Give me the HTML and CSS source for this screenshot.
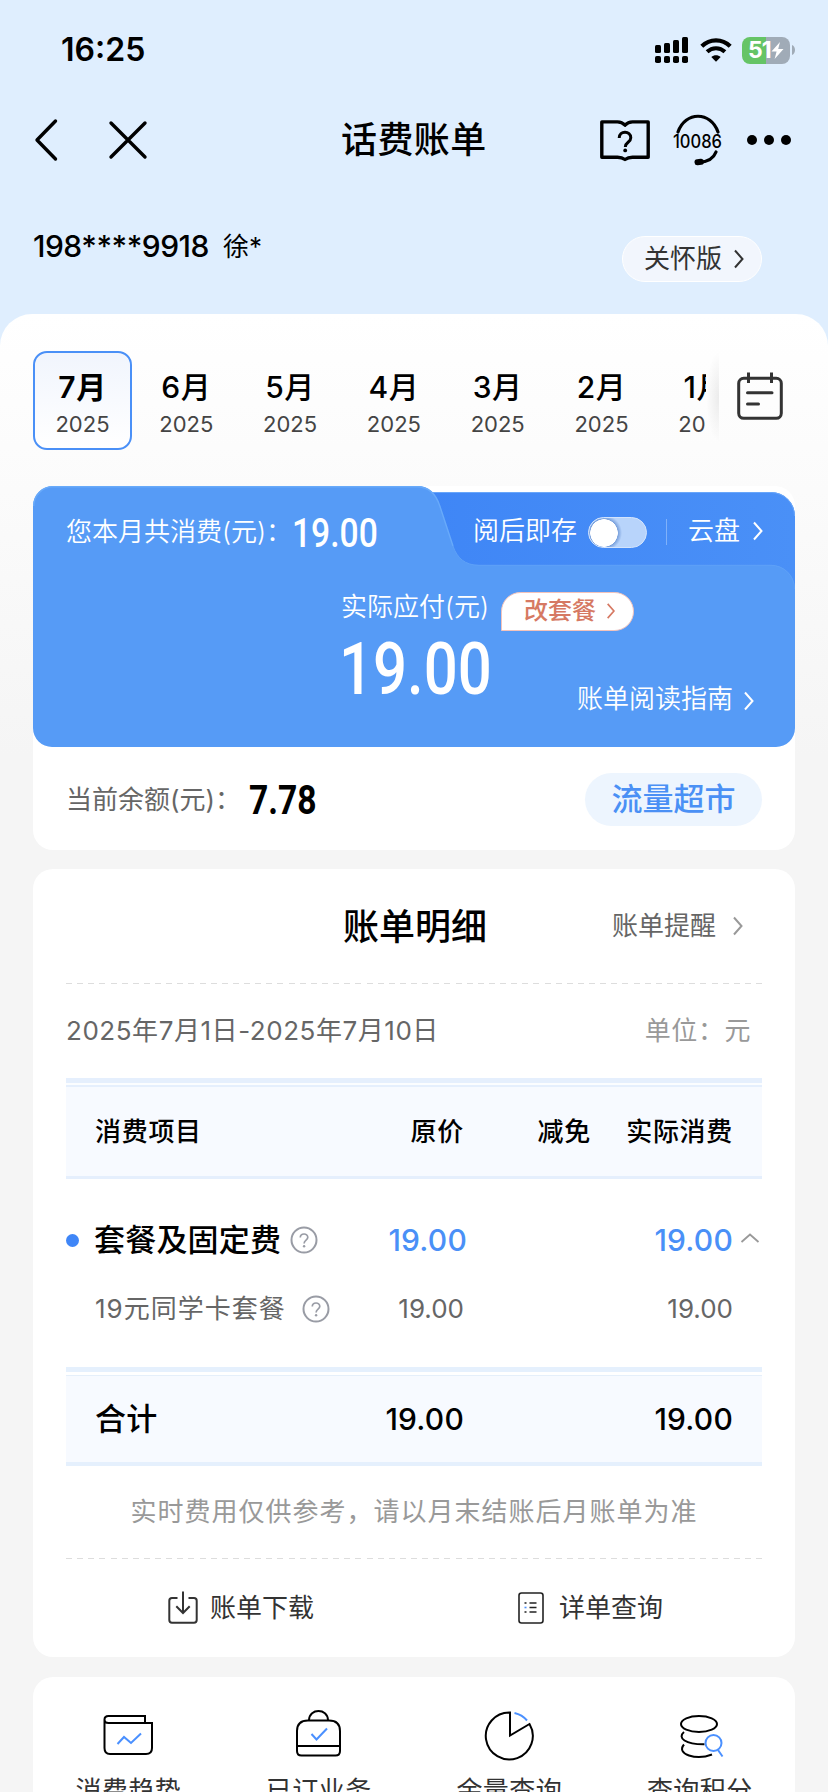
FILE: index.html
```html
<!DOCTYPE html>
<html lang="zh-CN">
<head>
<meta charset="utf-8">
<meta name="viewport" content="width=device-width, initial-scale=1">
<title>话费账单</title>
<link rel="stylesheet" href="styles.css">
</head>
<body>
<!-- shared icons -->
<svg width="0" height="0" class="defs">
  <symbol id="arrow" viewBox="0 0 12 20"><path d="M2 1.5 L9.5 10 L2 18.5" fill="none" stroke="currentColor" stroke-width="2"/></symbol>
  <symbol id="help" viewBox="0 0 28 28">
    <circle cx="14" cy="14" r="12.5" fill="none" stroke="#999ca5" stroke-width="2"/>
    <path d="M10.3 11.6 C10.3 6.8 17.8 6.9 17.8 11.3 C17.8 14.2 14.1 14 14.1 17.4" fill="none" stroke="#999ca5" stroke-width="1.7"/>
    <circle cx="14.1" cy="20.3" r="1.2" fill="#999ca5"/>
  </symbol>
</svg>

<div class="status">
  <span class="time">16:25</span>
  <svg class="signal" width="34" height="27" viewBox="0 0 34 27">
    <rect x="0" y="8" width="6" height="8" rx="1.5"/><rect x="9" y="6" width="6" height="10" rx="1.5"/>
    <rect x="18" y="3" width="6" height="13" rx="1.5"/><rect x="27" y="0" width="6" height="16" rx="1.5"/>
    <rect x="0" y="19" width="6" height="7" rx="1.8"/><rect x="9" y="19" width="6" height="7" rx="1.8"/>
    <rect x="18" y="19" width="6" height="7" rx="1.8"/><rect x="27" y="19" width="6" height="7" rx="1.8"/>
  </svg>
  <svg class="wifi" width="32" height="24" viewBox="0 0 32 24">
    <path d="M1.8 8.2 C9.8 0.3 22.2 0.3 30.2 8.2" fill="none" stroke="#000" stroke-width="4.2"/>
    <path d="M7.1 13.8 C12.2 8.9 19.8 8.9 24.9 13.8" fill="none" stroke="#000" stroke-width="4"/>
    <path d="M11.3 19 C14 16.6 18 16.6 20.7 19 L16 23.8 Z"/>
  </svg>
  <div class="battery"><b>51</b><svg width="13" height="17" viewBox="0 0 13 17"><path d="M9 0 L0.5 9.6 H5.6 L3.6 17 L12.5 7 H7.2 Z" fill="#fff"/></svg></div>
  <svg class="cap" width="4" height="10" viewBox="0 0 4 10"><path d="M0 0 C4 1.5 4 8.5 0 10 Z" fill="#a0abb7"/></svg>
</div>

<div class="nav">
  <svg width="24" height="44" viewBox="0 0 24 44"><path d="M21.5 3 L3 22 L21.5 41" fill="none" stroke="#000" stroke-width="3.4" stroke-linecap="round" stroke-linejoin="round"/></svg>
  <svg class="close" width="40" height="40" viewBox="0 0 40 40"><path d="M3 3 L37 37 M37 3 L3 37" fill="none" stroke="#000" stroke-width="3.4" stroke-linecap="round"/></svg>
  <h1>话费账单</h1>
  <svg class="book" width="50" height="44" viewBox="0 0 50 44" fill="none" stroke="#000" stroke-width="3.4">
    <path d="M1.8 3.9 H17.5 C21 3.9 23 5 25 7.2 C27 5 29 3.9 32.5 3.9 H48.2 V39.2 H32.5 C29 39.2 27 40 25 41.5 C23 40 21 39.2 17.5 39.2 H1.8 Z" stroke-linejoin="round"/>
    <path d="M19.2 20 C19.2 12.300 30.800 12.300 30.800 19.700 C30.800 24.500 25.300 24 25.300 29" stroke-width="3"/>
    <circle cx="25.2" cy="32.400" r="1.9" fill="#000" stroke="none"/>
  </svg>
  <svg class="headset" width="52" height="52" viewBox="0 0 52 52" fill="none" stroke="#000" stroke-width="3.2" stroke-linecap="round">
    <path d="M6 18 C13 -3 39 -3 46 18"/>
    <path d="M44 38 C41 46 34 48 27 48.2"/>
    <path d="M25.5 48.3 L29 47.8" stroke-width="6"/>
    <text x="1" y="34" textLength="49" lengthAdjust="spacingAndGlyphs">10086</text>
  </svg>
  <svg class="dots" width="46" height="12" viewBox="0 0 46 12"><circle cx="6" cy="6" r="5"/><circle cx="23" cy="6" r="5"/><circle cx="40" cy="6" r="5"/></svg>
</div>

<div class="user">
  <span class="phone">198****9918</span>
  <span class="name">徐*</span>
  <a class="care">关怀版<svg width="12" height="22"><use href="#arrow"/></svg></a>
</div>

<div class="sheet">
  <div class="months">
    <div class="month-list">
      <div class="month active"><b>7月</b><span>2025</span></div>
      <div class="month"><b>6月</b><span>2025</span></div>
      <div class="month"><b>5月</b><span>2025</span></div>
      <div class="month"><b>4月</b><span>2025</span></div>
      <div class="month"><b>3月</b><span>2025</span></div>
      <div class="month"><b>2月</b><span>2025</span></div>
      <div class="month"><b>1月</b><span>2025</span></div>
    </div>
    <div class="month-shadow"></div>
    <svg class="calendar" width="46" height="48" viewBox="0 0 46 48" fill="none" stroke="#333" stroke-width="3">
      <rect x="1.7" y="6.3" width="42.6" height="40" rx="5"/>
      <path d="M11.5 0.5 V11 M34.5 0.5 V11"/>
      <path d="M10.5 20.7 H35 M10.5 32 H21.5" stroke-linecap="round"/>
    </svg>
  </div>

  <div class="card summary">
    <div class="blue">
      <svg class="blue-bg" width="762" height="262" viewBox="0 0 762 262">
        <defs><linearGradient id="deep"><stop offset="0.2" stop-color="#3f86f6"/><stop offset="1" stop-color="#4a90f7"/></linearGradient></defs>
        <path d="M300 6 H738 A24 24 0 0 1 762 30 V150 H300 Z" fill="url(#deep)"/>
        <path d="M390 6.5 H738 A23.5 23.5 0 0 1 761.5 30" fill="none" stroke="#68a6fa"/>
        <path d="M0 20 A20 20 0 0 1 20 0 H384 C396 0 403 7 407 20 L420 60 C424 72 432 79 446 79 H738 A24 24 0 0 1 762 103 V242 A19 19 0 0 1 743 261 H19 A19 19 0 0 1 0 242 Z" fill="#569bf6"/>
        <path d="M0.7 20 A19.3 19.3 0 0 1 20 0.8 H384 C396 0.8 403 7.8 407 20.5 L420 60" fill="none" stroke="#68aafa" stroke-width="1.4"/>
        <path d="M420 60 C424 72 432 79.3 446 79.3 H738 A23.5 23.5 0 0 1 761.5 103" fill="none" stroke="#5ea1f8"/>
      </svg>
      <div class="blue-text">
        <div class="spent">
          <span>您本月共消费(元)：</span>
          <b class="din">19.00</b>
          <span class="save">阅后即存</span>
          <i class="switch"></i>
          <i class="bar"></i>
          <span class="disk">云盘</span>
          <svg class="go" width="12" height="20"><use href="#arrow"/></svg>
        </div>
        <div class="payable"><span>实际应付(元)</span><a class="change">改套餐<svg width="10" height="18"><use href="#arrow"/></svg></a></div>
        <div class="amount">
          <b class="din">19.00</b>
          <span class="guide">账单阅读指南<svg width="12" height="20"><use href="#arrow"/></svg></span>
        </div>
      </div>
    </div>
    <div class="balance">
      <span>当前余额(元)：</span>
      <b class="din">7.78</b>
      <a class="market">流量超市</a>
    </div>
  </div>

  <div class="card detail">
    <div class="detail-head">
      <h2>账单明细</h2>
      <a>账单提醒<svg width="12" height="20"><use href="#arrow"/></svg></a>
    </div>
    <div class="dash"></div>
    <div class="period"><span>2025年7月1日-2025年7月10日</span><span class="unit">单位：元</span></div>

    <div class="row thead"><span>消费项目</span><span>原价</span><span>减免</span><span>实际消费</span></div>
    <div class="row group">
      <span class="item"><i></i>套餐及固定费<svg width="28" height="28"><use href="#help"/></svg></span>
      <span class="price">19.00</span><span></span><span>19.00</span>
      <svg class="caret" width="20" height="12" viewBox="0 0 20 12"><path d="M1.5 10 L10 2.5 L18.5 10" fill="none" stroke="#999" stroke-width="1.8"/></svg>
    </div>
    <div class="row sub">
      <span class="item">19元同学卡套餐<svg width="28" height="28"><use href="#help"/></svg></span>
      <span>19.00</span><span></span><span>19.00</span>
    </div>
    <div class="row total"><span class="item">合计</span><span>19.00</span><span></span><span>19.00</span></div>

    <p class="note">实时费用仅供参考，请以月末结账后月账单为准</p>
    <div class="dash"></div>
    <div class="links">
      <a class="download">
        <svg width="30" height="34" viewBox="0 0 30 34" fill="none" stroke="#333" stroke-width="2">
          <path d="M9.5 7 H4 Q1.3 7 1.3 9.7 V29 Q1.3 31.7 4 31.7 H26 Q28.7 31.7 28.7 29 V9.7 Q28.7 7 26 7 H20.5"/>
          <path d="M15 0.5 V22 M8.3 15.3 L15 22 L21.7 15.3"/>
        </svg>账单下载</a>
      <a class="query">
        <svg width="26" height="32" viewBox="0 0 26 32" fill="none" stroke="#222" stroke-width="1.6">
          <rect x="1" y="1" width="24" height="30" rx="2.5"/>
          <path d="M11.5 11 H18.5 M11.5 15.5 H18.5 M11.5 20 H18.5 M6.5 11 H8.5 M6.5 20 H8.5"/>
          <path d="M6.5 15.5 H8.5" stroke="#4a90ff"/>
        </svg>详单查询</a>
    </div>
  </div>

  <div class="card tools">
    <a>
      <svg width="50" height="52" viewBox="0 0 50 52" fill="none" stroke="#000" stroke-width="2">
        <path d="M42 12 V6 H5.5 Q1.5 6 1.5 9.5 Q1.5 13 5.5 13 H49 V38 Q49 44 43 44 H7 Q1.5 44 1.5 38 V9.5"/>
        <path d="M14.5 34 L21 27 L28 33 L38 23.5" stroke="#4a90ff"/>
      </svg>
      <span>消费趋势</span></a>
    <a>
      <svg width="50" height="52" viewBox="0 0 50 52" fill="none" stroke="#000" stroke-width="2">
        <path d="M15 10 C15.5 -2 33.5 -2 34 10"/>
        <path d="M3 21 Q3 10.5 14 10.5 H35 Q46 10.5 46 21 V41 Q46 45.5 41.5 45.5 H7.5 Q3 45.5 3 41 Z M3 36 H46"/>
        <path d="M17.5 24 L22.5 29.5 L33 18.5" stroke="#4a90ff"/>
      </svg>
      <span>已订业务</span></a>
    <a>
      <svg width="50" height="52" viewBox="0 0 50 52" fill="none" stroke="#000" stroke-width="2">
        <path d="M26 2.500 V25.500 L45.500 14 A23.500 23.500 0 1 1 26 2.500 Z"/>
        <path d="M30.500 3 A23 23 0 0 1 43 10.500" stroke="#4a90ff"/>
      </svg>
      <span>余量查询</span></a>
    <a>
      <svg width="50" height="52" viewBox="0 0 50 52" fill="none" stroke="#000" stroke-width="2">
        <ellipse cx="24" cy="14" rx="18" ry="8"/>
        <path d="M9 22 C2 28 10.500 34.500 29.500 34.300 M9 34.500 C0.500 44.500 21.500 50.500 37 44.500"/>
        <g stroke="#4a90ff"><circle cx="38.500" cy="33" r="8"/><path d="M43 40 L47.500 46.500"/></g>
      </svg>
      <span>查询积分</span></a>
  </div>
</div>
</body>
</html>
```
FILE: styles.css
```css
* {
  box-sizing: border-box;
}
body {
  margin: 0;
  width: 828px;
  height: 1792px;
  overflow: hidden;
  background: #dfeefe;
  font-family: Inter, "Noto Sans CJK SC", sans-serif;
  font-size: 26px;
  line-height: 36px;
  color: #000;
}
svg {
  display: block;
  flex: none;
}
.defs {
  position: absolute;
}
h1, h2, p {
  margin: 0;
}
a, span, b {
  white-space: nowrap;
}

/* status bar */
.status {
  height: 100px;
  padding-left: 61px;
  display: flex;
  align-items: center;
}
.time {
  width: 594px;
  font-size: 32px;
  font-weight: 600;
}
.wifi {
  margin-left: 11px;
}
.battery {
  width: 48px;
  height: 27px;
  margin-left: 10px;
  padding-left: 6px;
  border-radius: 8px;
  background: linear-gradient(90deg, #65c466 50%, #a0abb7 50%);
  display: flex;
  align-items: center;
}
.battery b {
  color: #fff;
  font-size: 23px;
  letter-spacing: -1px;
}
.cap {
  margin-left: 2px;
}

/* title bar */
.nav {
  height: 80px;
  padding-left: 34px;
  display: flex;
  align-items: center;
}
.close {
  margin-left: 50px;
}
h1 {
  width: 144px;
  margin-left: 193px;
  font-size: 36px;
  font-weight: 500;
  letter-spacing: .4px;
  line-height: 50px;
  white-space: nowrap;
}
.book {
  margin-left: 115px;
}
.headset {
  margin-left: 22px;
  overflow: visible;
}
.headset text {
  fill: #000;
  stroke: none;
  font-size: 18px;
  font-weight: 500;
}
.dots {
  margin-left: 22px;
}

.user {
  height: 134px;
  padding: 48px 66px 0 33px;
  display: flex;
  align-items: flex-start;
}
.phone {
  font-size: 30px;
  font-weight: 500;
  letter-spacing: -.5px;
}
.name {
  margin: 1px 0 0 14px;
}
.care {
  width: 140px;
  height: 46px;
  margin: 8px 0 0 auto;
  padding-left: 21px;
  border: 1px solid #fff;
  border-radius: 23px;
  background: #f2f6fd;
  color: #333;
  display: flex;
  align-items: center;
}
.care svg {
  margin-left: 11px;
}

.sheet {
  padding: 37px 33px 0;
  border-radius: 32px 32px 0 0;
  background: linear-gradient(#fff, #f5f5f5 442px);
}

/* month picker */
.months {
  height: 135px;
  display: flex;
}
.month-list {
  width: 673px;
  display: flex;
  gap: 4.8px;
  overflow: hidden;
}
.month {
  flex: none;
  width: 99px;
  height: 99px;
  padding-top: 18px;
  text-align: center;
}
.month b, .month span {
  display: block;
}
.month b {
  font-size: 30px;
  font-weight: 500;
  letter-spacing: .6px;
}
.month span {
  color: #444;
  font-size: 22px;
  line-height: 38px;
}
.active {
  padding-top: 16px;
  border: 2px solid #4a90f7;
  border-radius: 14px;
  background: linear-gradient(#f1f5fd, #fff);
}
.active b {
  font-weight: 600;
}
.month-shadow {
  width: 13px;
  height: 92px;
  background: radial-gradient(ellipse at right, rgba(0, 0, 0, .07), rgba(0, 0, 0, 0) 70%);
}
.calendar {
  margin: 21px 0 0 18px;
}

.card {
  border-radius: 20px;
  background: #fff;
}

/* bill summary */
.summary {
  height: 364px;
}
.blue {
  display: grid;
  height: 261px;
  color: #fff;
  font-weight: 350;
}
.blue-bg, .blue-text {
  grid-area: 1 / 1;
}
.din {
  display: inline-block;
  font-family: Roboto, sans-serif;
  font-size: 41px;
  font-weight: 500;
  transform: scaleX(.82);
  transform-origin: left;
}
.spent {
  height: 92px;
  padding-left: 33px;
  display: flex;
  align-items: center;
}
.spent > span:first-child {
  width: 226px;
}
.spent .din {
  width: 181px;
  padding-top: 2px;
}
.save {
  width: 104px;
}
.save, .disk {
  padding-bottom: 3px;
}
.switch {
  width: 59px;
  height: 31px;
  margin-left: 11px;
  border: 1px solid #d3e4fd;
  border-radius: 16px;
  background: radial-gradient(circle at 15px 15px, #fff 13.5px, rgba(60, 110, 190, .5) 14px, rgba(184, 212, 251, 0) 18px), #b8d4fb;
}
.bar {
  width: 1px;
  height: 26px;
  margin: 0 21px 0 19px;
  background: #7fb1fa;
}
.go {
  margin: 0 0 3px 12px;
}
.payable {
  height: 52px;
  padding: 9px 0 0 308px;
  display: flex;
  align-items: center;
}
.payable > span {
  width: 160px;
  padding-bottom: 4px;
}
.change {
  width: 133px;
  height: 39px;
  margin-top: 5px;
  padding-left: 22px;
  border: 1px solid #f3c3bb;
  border-radius: 20px 20px 20px 0;
  background: #fff;
  color: #d67963;
  font-size: 24px;
  font-weight: 500;
  display: flex;
  align-items: center;
}
.change svg {
  margin-left: 10px;
}
.amount {
  padding-left: 306px;
  display: flex;
}
.amount .din {
  width: 238px;
  font-size: 73px;
  line-height: 78px;
}
.guide {
  display: flex;
  align-items: center;
  height: 36px;
  margin-top: 51px;
}
.guide svg {
  margin: 4px 0 0 10px;
}
.balance {
  height: 103px;
  padding: 2px 33px 0;
  display: flex;
  align-items: center;
  color: #666;
}
.balance > span {
  width: 182px;
}
.balance .din {
  margin-left: 1px;
  color: #000;
  font-weight: 700;
}
.market {
  width: 177px;
  height: 53px;
  margin-left: auto;
  border-radius: 27px;
  background: #edf5fe;
  color: #4a90f5;
  font-size: 31px;
  font-weight: 500;
  line-height: 51px;
  text-align: center;
}

/* bill detail */
.detail {
  height: 788px;
  margin-top: 19px;
  padding: 0 33px;
}
.detail-head {
  height: 114px;
  padding-left: 277px;
  display: flex;
  align-items: center;
}
h2 {
  padding-top: 2px;
  font-size: 36px;
  font-weight: 500;
  line-height: 50px;
}
.detail-head a {
  margin-left: 125px;
  color: #666;
  display: flex;
  align-items: center;
}
.detail-head svg {
  margin-left: 16px;
  color: #999;
}
.dash {
  height: 1px;
  background: repeating-linear-gradient(90deg, #ddd 0 6px, #fff 6px 11.13px);
}
.period {
  height: 94px;
  padding-right: 11px;
  display: flex;
  align-items: center;
  justify-content: space-between;
  color: #666;
  letter-spacing: .55px;
}
.unit {
  color: #999;
}
.row {
  display: grid;
  grid-template-columns: 245px 124px 127px 142px;
  align-items: center;
  position: relative;
  padding-left: 29px;
  text-align: right;
}
.row > span:first-child {
  text-align: left;
}
.thead {
  height: 101px;
  padding-top: 4px;
  border-top: 5px solid #e5effd;
  border-bottom: 3px solid #e5effd;
  background: linear-gradient(#fbfdff 2px, #e5effd 2px 4px, #f7faff 4px);
  font-weight: 500;
  letter-spacing: .7px;
}
.item {
  display: flex;
  align-items: center;
}
.group {
  height: 60px;
  margin-top: 31px;
  color: #4a90f7;
  font-size: 30px;
  font-weight: 500;
  letter-spacing: .2px;
}
.group .price {
  margin-right: -3px;
}
.group .item {
  color: #000;
  font-size: 31px;
}
.group .item i {
  width: 13px;
  height: 13px;
  margin: 0 15px 0 -29px;
  border-radius: 50%;
  background: #3f86f7;
}
.group .item svg {
  margin-left: 9px;
}
.caret {
  position: absolute;
  right: 2px;
  top: 22px;
}
.sub {
  height: 78px;
  color: #666;
}
.sub .item {
  letter-spacing: 1px;
}
.sub .item svg {
  margin-left: 16px;
}
.total {
  height: 99px;
  margin-top: 19px;
  padding-top: 4px;
  border-top: 5px solid #e5f0fd;
  border-bottom: 4px solid #e5f0fd;
  background: linear-gradient(#fff 3px, #e5effa 3px 4px, #f7faff 4px);
  font-size: 30px;
  font-weight: 500;
  letter-spacing: .2px;
}
.total .item {
  font-size: 31px;
}
.note {
  height: 92px;
  color: #999;
  letter-spacing: 1px;
  line-height: 92px;
  text-align: center;
  white-space: nowrap;
}
.links {
  height: 98px;
  display: flex;
  align-items: center;
  color: #333;
}
.links a {
  display: flex;
  align-items: center;
}
.download {
  width: 350px;
  padding-left: 102px;
}
.query {
  padding-left: 102px;
}
.download svg {
  margin-right: 12px;
}
.query svg {
  margin-right: 15px;
}

/* shortcuts */
.tools {
  height: 150px;
  margin-top: 20px;
  padding-top: 33px;
  display: grid;
  grid-template-columns: repeat(4, 1fr);
  color: #333;
}
.tools a {
  display: flex;
  flex-direction: column;
  align-items: center;
}
.tools span {
  margin-top: 11px;
  letter-spacing: .4px;
}
```
